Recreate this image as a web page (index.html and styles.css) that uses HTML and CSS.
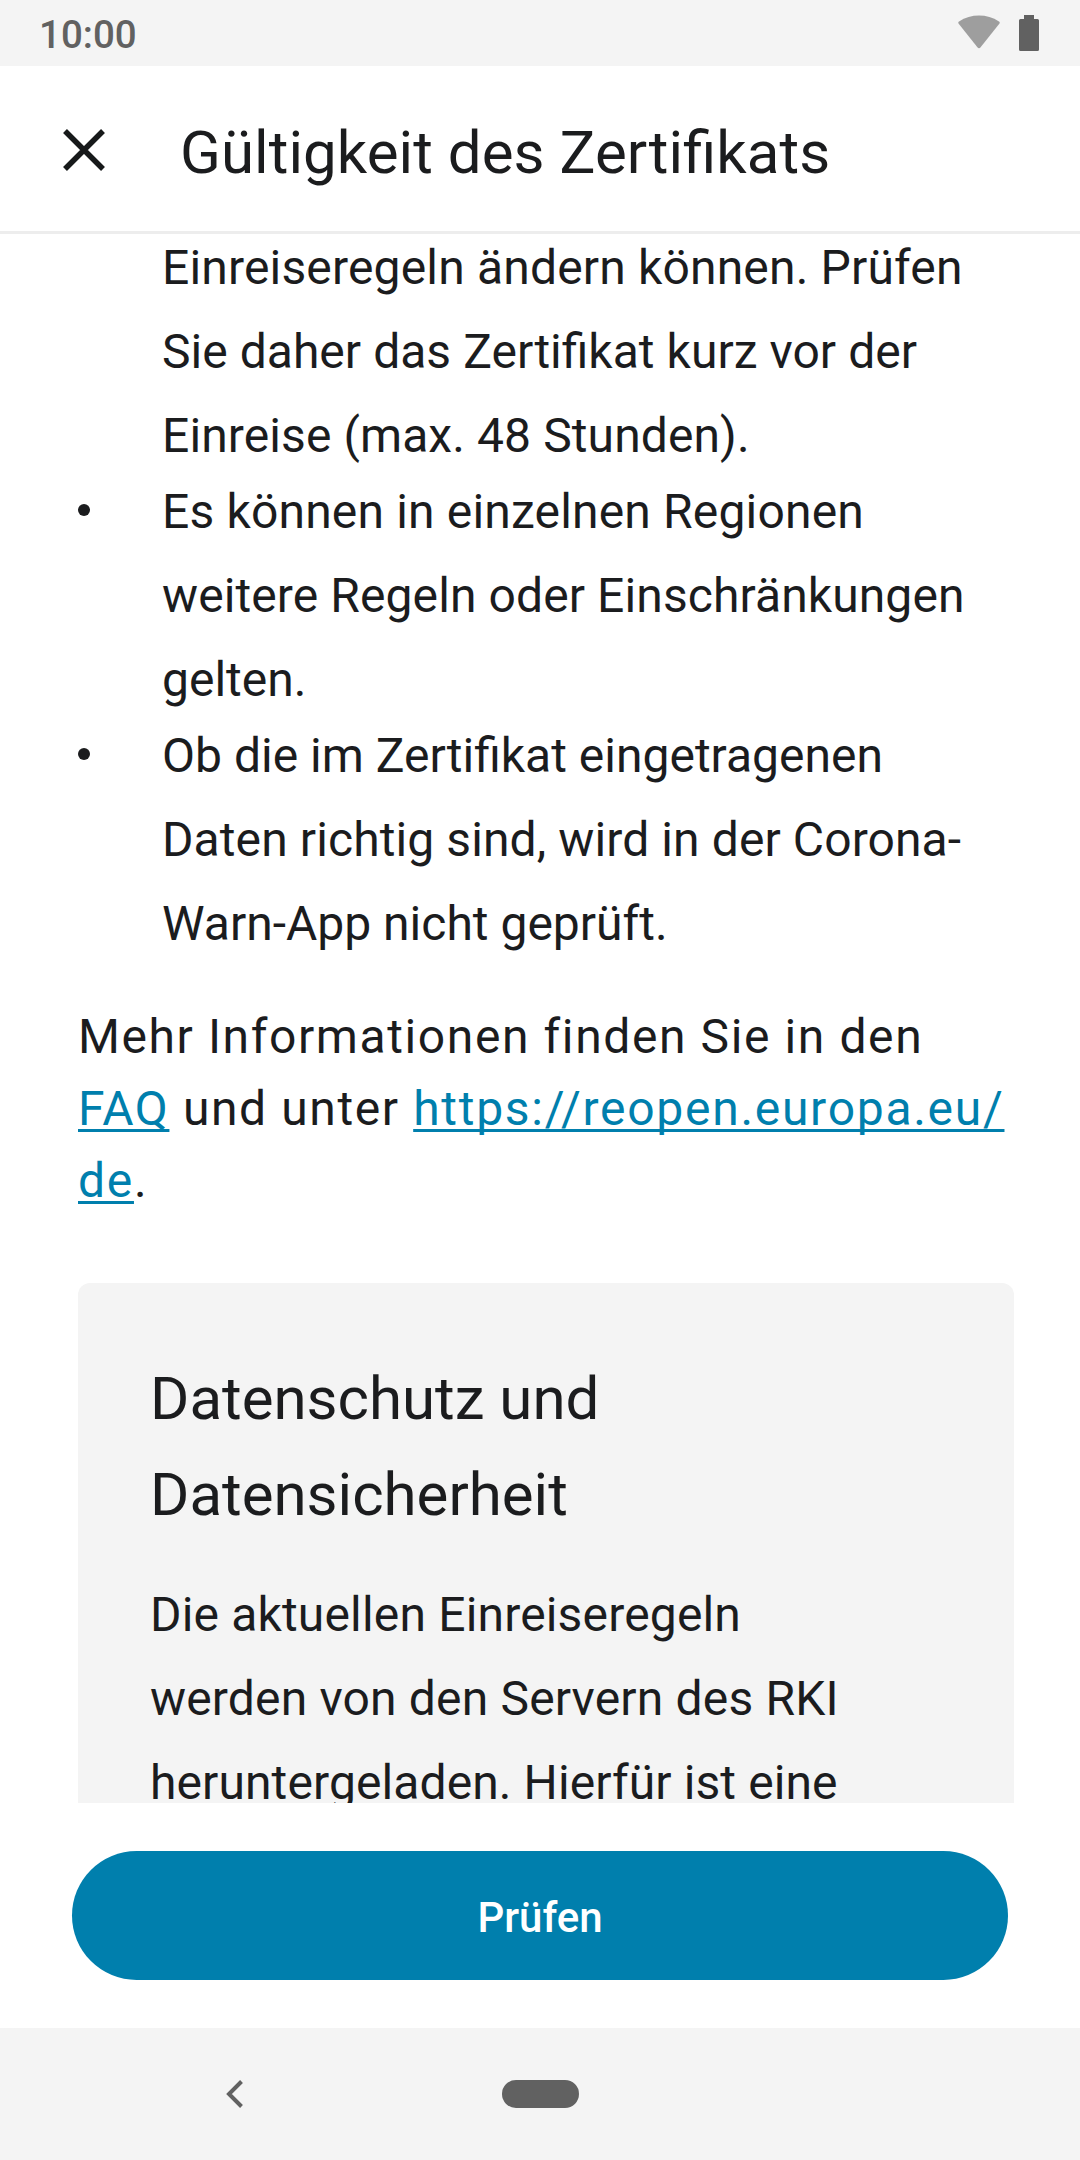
FILE: index.html
```html
<!DOCTYPE html>
<html lang="de">
<head>
<meta charset="utf-8">
<title>Gültigkeit des Zertifikats</title>
<link rel="stylesheet" href="styles.css">
</head>
<body>
<div class="screen">
  <div class="status">
    <span class="clock">10:00</span>
    <svg class="wifi" width="42" height="34" viewBox="0 0 42 34"><path d="M.7 8.800Q-.3 7.500 1 6.500C13-1.400 29-1.400 41 6.500Q42.300 7.500 41.300 8.800L22.600 32.300Q21 34 19.400 32.300Z" fill="#9e9e9e"/></svg>
    <svg class="battery" width="20" height="36" viewBox="0 0 20 36"><path d="M5 0h10v4h3.500q1.500 0 1.500 1.500v29q0 1.500-1.500 1.500h-17Q0 36 0 34.500v-29Q0 4 1.500 4H5z" fill="#616161"/></svg>
  </div>
  <header class="toolbar">
    <svg class="close" width="42" height="42" viewBox="0 0 42 42"><path d="M2 2l38 38M40 2L2 40" stroke="#17191a" stroke-width="5.500" fill="none"/></svg>
    <h1 class="title">Gültigkeit des Zertifikats</h1>
  </header>
  <main class="content">
    <ul class="list">
      <li class="item first"><span class="wide">Einreiseregeln ändern können. Prüfen</span><br><span class="even">Sie daher das Zertifikat kurz vor der</span><br><span class="loose">Einreise (max. 48 Stunden).</span></li>
      <li class="item"><span class="dot"></span><span class="wide">Es können in einzelnen Regionen</span><br><span class="loose">weitere Regeln oder Einschränkungen</span><br>gelten.</li>
      <li class="item"><span class="dot"></span>Ob die im Zertifikat eingetragenen<br><span class="loose">Daten richtig sind, wird in der Corona-</span><br>Warn-App nicht geprüft.</li>
    </ul>
    <p class="more">Mehr Informationen finden Sie in den<br><a class="link">FAQ</a> und unter <a class="link url">https://reopen.europa.eu/<br>de</a>.</p>
    <section class="card">
      <h2 class="heading">Datenschutz und<br>Datensicherheit</h2>
      <p class="text"><span class="wide">Die aktuellen Einreiseregeln</span><br><span class="wide">werden von den Servern des RKI</span><br><span class="loose">heruntergeladen. Hierfür ist eine</span></p>
    </section>
  </main>
  <footer class="footer"><button class="button">Prüfen</button></footer>
  <nav class="nav">
    <svg class="back" width="18" height="28" viewBox="0 0 18 28"><path d="M15.500 1.500L3 14l12.500 12.500" stroke="#616161" stroke-width="4" fill="none"/></svg>
    <span class="home"></span>
  </nav>
</div>
</body>
</html>
```
FILE: styles.css
```css
* { box-sizing: border-box; margin: 0; padding: 0; }
body { font-family: Roboto, "Noto Sans", sans-serif; color: #1b1c1e; background: #fff; }
.screen { width: 1080px; height: 2160px; display: flex; flex-direction: column; overflow: hidden; }
.status { height: 66px; flex: none; background: #f4f4f4; display: flex; align-items: flex-start; padding: 15px 41px 0 39px; color: #616161; }
.clock { font-size: 38.5px; font-weight: 500; flex: 1; line-height: 40px; }
.battery { margin-left: 19px; }
.toolbar { height: 168px; flex: none; display: flex; align-items: center; padding-left: 63px; border-bottom: 3px solid #ededed; }
.close { margin-top: 2px; }
.title { font-size: 60px; font-weight: 400; margin-left: 75px; padding-top: 9px; line-height: 80px; white-space: nowrap; letter-spacing: 0.06px; font-feature-settings: "liga" 1; }
.content { height: 1569px; flex: none; overflow: hidden; padding: 0 66px 0 78px; }
.list { list-style: none; }
.item { font-size: 48px; line-height: 84px; padding-left: 84px; height: 244px; white-space: nowrap; display: block; position: relative; }
.first { margin-top: -8px; }
.wide { letter-spacing: 0.17px; }
.loose { letter-spacing: 0.1px; }
.even { word-spacing: 0.2px; }
.dot { position: absolute; left: 0; top: 34px; width: 12px; height: 12px; border-radius: 50%; background: #1b1c1e; }
.more { font-size: 48px; line-height: 72px; letter-spacing: 1.600px; margin-top: 43px; white-space: nowrap; }
.link { color: #007fad; text-decoration: underline 3px; text-underline-offset: 4px; text-decoration-skip-ink: none; }
.url { letter-spacing: 1.720px; }
.card { background: #f4f4f4; border-radius: 12px 12px 0 0; height: 600px; margin-top: 66px; padding: 68px 72px; }
.heading { font-size: 60px; font-weight: 400; line-height: 96px; }
.text { font-size: 48px; line-height: 84px; margin-top: 30px; white-space: nowrap; }
.footer { height: 225px; flex: none; padding: 48px 72px; }
.button { display: block; width: 936px; height: 129px; border: 0; border-radius: 65px; background: #007fad; color: #fff; font: 500 42px Roboto, sans-serif; padding-top: 4px; }
.nav { height: 132px; flex: none; background: #f4f4f4; display: flex; align-items: center; padding-left: 226px; }
.home { width: 77px; height: 28px; border-radius: 14px; background: #616161; margin-left: 258px; }
```
